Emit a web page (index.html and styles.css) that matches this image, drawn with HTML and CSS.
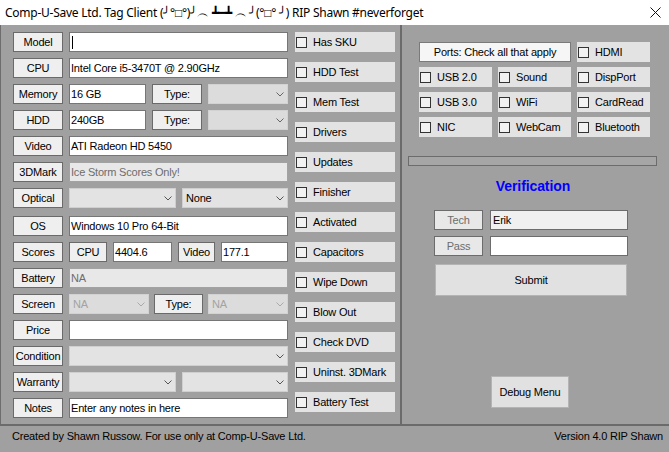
FILE: index.html
```html
<!DOCTYPE html>
<html>
<head>
<meta charset="utf-8">
<link rel="stylesheet" href="styles.css">
</head>
<body>
<div class="win">
  <div class="titlebar">
    <span class="title">Comp-U-Save Ltd. Tag Client (╯°□°)╯︵ ┻━┻ ︵ ╯(°□° ╯) RIP Shawn #neverforget</span>
    <svg class="close" width="11" height="11" viewBox="0 0 11 11"><path d="M0.5 0.5 L10.5 10.5 M10.5 0.5 L0.5 10.5" stroke="#111" stroke-width="1" fill="none"/></svg>
  </div>
  <div class="main">
    <div class="left">
      <div class="form">
        <div class="row"><span class="lbl w50">Model</span><span class="inp w219"><span class="caret"></span></span></div>
        <div class="row"><span class="lbl w50">CPU</span><span class="inp w219">Intel Core i5-3470T @ 2.90GHz</span></div>
        <div class="row"><span class="lbl w50">Memory</span><span class="inp w77">16 GB</span><span class="lbl w50">Type:</span><span class="sel dis w80"><span class="sv"></span><svg class="chev" width="8" height="5" viewBox="0 0 8 5"><path d="M0.5 0.5 L4 4 L7.5 0.5" stroke="#666" fill="none"/></svg></span></div>
        <div class="row"><span class="lbl w50">HDD</span><span class="inp w77">240GB</span><span class="lbl w50">Type:</span><span class="sel dis w80"><span class="sv"></span><svg class="chev" width="8" height="5" viewBox="0 0 8 5"><path d="M0.5 0.5 L4 4 L7.5 0.5" stroke="#666" fill="none"/></svg></span></div>
        <div class="row"><span class="lbl w50">Video</span><span class="inp w219">ATI Radeon HD 5450</span></div>
        <div class="row"><span class="lbl w50">3DMark</span><span class="inp ro w219">Ice Storm Scores Only!</span></div>
        <div class="row"><span class="lbl w50">Optical</span><span class="sel w107"><span class="sv"></span><svg class="chev" width="8" height="5" viewBox="0 0 8 5"><path d="M0.5 0.5 L4 4 L7.5 0.5" stroke="#555" fill="none"/></svg></span><span class="sel w106"><span class="sv">None</span><svg class="chev" width="8" height="5" viewBox="0 0 8 5"><path d="M0.5 0.5 L4 4 L7.5 0.5" stroke="#555" fill="none"/></svg></span></div>
        <div class="row os"><span class="lbl w50">OS</span><span class="inp w219">Windows 10 Pro 64-Bit</span></div>
        <div class="row"><span class="lbl w50">Scores</span><span class="lbl w38">CPU</span><span class="inp w59">4404.6</span><span class="lbl w37">Video</span><span class="inp w67">177.1</span></div>
        <div class="row"><span class="lbl w50">Battery</span><span class="inp ro w219">NA</span></div>
        <div class="row tight"><span class="lbl w50">Screen</span><span class="sel dis w80"><span class="sv">NA</span><svg class="chev" width="8" height="5" viewBox="0 0 8 5"><path d="M0.5 0.5 L4 4 L7.5 0.5" stroke="#aaa" fill="none"/></svg></span><span class="lbl w49">Type:</span><span class="sel dis w80"><span class="sv">NA</span><svg class="chev" width="8" height="5" viewBox="0 0 8 5"><path d="M0.5 0.5 L4 4 L7.5 0.5" stroke="#aaa" fill="none"/></svg></span></div>
        <div class="row"><span class="lbl w50">Price</span><span class="inp w219"></span></div>
        <div class="row"><span class="lbl w50">Condition</span><span class="sel w219"><span class="sv"></span><svg class="chev" width="8" height="5" viewBox="0 0 8 5"><path d="M0.5 0.5 L4 4 L7.5 0.5" stroke="#555" fill="none"/></svg></span></div>
        <div class="row"><span class="lbl w50">Warranty</span><span class="sel w107"><span class="sv"></span><svg class="chev" width="8" height="5" viewBox="0 0 8 5"><path d="M0.5 0.5 L4 4 L7.5 0.5" stroke="#555" fill="none"/></svg></span><span class="sel w106"><span class="sv"></span><svg class="chev" width="8" height="5" viewBox="0 0 8 5"><path d="M0.5 0.5 L4 4 L7.5 0.5" stroke="#555" fill="none"/></svg></span></div>
        <div class="row"><span class="lbl w50">Notes</span><span class="inp w219">Enter any notes in here</span></div>
      </div>
      <div class="checks">
        <div class="chk"><span class="box"></span>Has SKU</div>
        <div class="chk"><span class="box"></span>HDD Test</div>
        <div class="chk"><span class="box"></span>Mem Test</div>
        <div class="chk"><span class="box"></span>Drivers</div>
        <div class="chk"><span class="box"></span>Updates</div>
        <div class="chk"><span class="box"></span>Finisher</div>
        <div class="chk"><span class="box"></span>Activated</div>
        <div class="chk"><span class="box"></span>Capacitors</div>
        <div class="chk"><span class="box"></span>Wipe Down</div>
        <div class="chk"><span class="box"></span>Blow Out</div>
        <div class="chk"><span class="box"></span>Check DVD</div>
        <div class="chk"><span class="box"></span>Uninst. 3DMark</div>
        <div class="chk"><span class="box"></span>Battery Test</div>
      </div>
    </div>
    <div class="right">
      <div class="ports">
        <div class="portsbtn">Ports: Check all that apply</div>
        <div class="chk pc"><span class="box"></span>HDMI</div>
        <div class="chk pc"><span class="box"></span>USB 2.0</div>
        <div class="chk pc"><span class="box"></span>Sound</div>
        <div class="chk pc"><span class="box"></span>DispPort</div>
        <div class="chk pc"><span class="box"></span>USB 3.0</div>
        <div class="chk pc"><span class="box"></span>WiFi</div>
        <div class="chk pc"><span class="box"></span>CardRead</div>
        <div class="chk pc"><span class="box"></span>NIC</div>
        <div class="chk pc"><span class="box"></span>WebCam</div>
        <div class="chk pc"><span class="box"></span>Bluetooth</div>
      </div>
      <div class="progress"></div>
      <div class="vtitle">Verification</div>
      <div class="vrow first"><span class="vlbl">Tech</span><span class="vinp ro">Erik</span></div>
      <div class="vrow"><span class="vlbl">Pass</span><span class="vinp"></span></div>
      <div class="btn submit">Submit</div>
      <div class="btn debug">Debug Menu</div>
    </div>
  </div>
  <div class="status">
    <span>Created by Shawn Russow. For use only at Comp-U-Save Ltd.</span>
    <span>Version 4.0 RIP Shawn</span>
  </div>
</div>
</body>
</html>
```

FILE: styles.css
```css
html, body {
  margin: 0;
  padding: 0;
}
body {
  width: 669px;
  height: 452px;
  overflow: hidden;
  background: #a0a0a0;
  font-family: "Liberation Sans", Arial, sans-serif;
  font-size: 11px;
  letter-spacing: -0.2px;
  color: #000;
}
.win {
  width: 669px;
  height: 452px;
  display: flex;
  flex-direction: column;
  background: #a0a0a0;
}
.titlebar {
  height: 25px;
  flex: none;
  background: #fff;
  display: flex;
  align-items: center;
  justify-content: space-between;
  padding: 0 8px 0 5px;
}
.title {
  font-family: "Noto Sans", "Open Sans", sans-serif;
  font-size: 12px;
  letter-spacing: -0.25px;
  white-space: nowrap;
  color: #000;
}
.close {
  display: block;
}
.main {
  display: flex;
  height: 401px;
  flex: none;
}
.left {
  width: 400px;
  box-sizing: border-box;
  border-left: 1px solid #6d6d6d;
  border-bottom: 2px solid #6b6b6b;
  padding: 7px 0 0 12px;
  display: flex;
}
.form {
  width: 275px;
  display: flex;
  flex-direction: column;
}
.row {
  display: flex;
  height: 20px;
  gap: 6px;
  margin-bottom: 6px;
}
.row.os {
  margin-top: 2px;
}
.row.tight {
  gap: 5px;
}
.row.tight .lbl.w50 {
  margin-right: 1px;
}
.lbl {
  box-sizing: border-box;
  height: 20px;
  border: 1px solid #6a6a6a;
  background: #efefef;
  display: flex;
  align-items: center;
  justify-content: center;
  white-space: nowrap;
  flex: none;
}
.inp {
  box-sizing: border-box;
  height: 20px;
  border: 1px solid #767676;
  background: #fff;
  display: flex;
  align-items: center;
  padding-left: 1px;
  white-space: nowrap;
  overflow: hidden;
  flex: none;
}
.inp.ro {
  background: #e8e8e8;
  border-color: #a2a2a2;
  color: #6d6d6d;
}
.caret {
  width: 1px;
  height: 13px;
  background: #000;
  margin-left: 1px;
}
.sel {
  box-sizing: border-box;
  height: 20px;
  border: 1px solid #cfcfcf;
  background: #e3e3e3;
  display: flex;
  align-items: center;
  justify-content: space-between;
  padding: 0 3px 0 3px;
  flex: none;
}
.sel.dis {
  background: #dcdcdc;
  border-color: #d2d2d2;
  color: #a3a3a3;
}
.sv {
  white-space: nowrap;
}
.chev {
  display: block;
}
.w219 { width: 219px; }
.w107 { width: 107px; }
.w106 { width: 106px; }
.w80 { width: 80px; }
.w77 { width: 77px; }
.w67 { width: 67px; }
.w59 { width: 59px; }
.w50 { width: 50px; }
.w49 { width: 49px; }
.w38 { width: 38px; }
.w37 { width: 37px; }

.checks {
  margin-left: 7px;
  width: 100px;
  display: flex;
  flex-direction: column;
}
.chk {
  height: 20px;
  background: #e3e3e3;
  display: flex;
  align-items: center;
  margin-bottom: 10px;
  white-space: nowrap;
}
.box {
  box-sizing: border-box;
  width: 11px;
  height: 11px;
  border: 1px solid #333;
  background: #f2f2f2;
  margin-left: 1px;
  margin-right: 6px;
  flex: none;
}
.right {
  flex: 1;
  border-left: 2px solid #6b6b6b;
  border-bottom: 2px solid #6b6b6b;
  display: flex;
  flex-direction: column;
  align-items: flex-start;
}
.ports {
  margin: 17px 0 0 17px;
  display: grid;
  grid-template-columns: 73px 73px 73px;
  grid-auto-rows: 20px;
  column-gap: 6px;
  row-gap: 5px;
}
.chk.pc {
  margin-bottom: 0;
}
.portsbtn {
  grid-column: span 2;
  box-sizing: border-box;
  border: 1px solid #7a7a7a;
  background: #f6f6f6;
  display: flex;
  align-items: center;
  justify-content: center;
}
.progress {
  margin: 19px 0 0 6px;
  width: 249px;
  height: 10px;
  box-sizing: border-box;
  border: 1px solid #6c6c6c;
  background: #a6a6a6;
}
.vtitle {
  width: 262px;
  margin-top: 12px;
  text-align: center;
  color: #0000ff;
  font-weight: bold;
  font-size: 14px;
  line-height: 16px;
  letter-spacing: -0.1px;
}
.vrow {
  display: flex;
  gap: 7px;
  margin: 6px 0 0 32px;
  height: 20px;
}
.vrow.first {
  margin-top: 16px;
}
.vlbl {
  box-sizing: border-box;
  width: 49px;
  height: 20px;
  border: 1px solid #6c6c6c;
  background: #e8e8e8;
  color: #6d6d6d;
  display: flex;
  align-items: center;
  justify-content: center;
}
.vinp {
  box-sizing: border-box;
  width: 138px;
  height: 20px;
  border: 1px solid #6c6c6c;
  background: #fff;
  display: flex;
  align-items: center;
  padding-left: 2px;
}
.vinp.ro {
  background: #f0f0f0;
}
.btn {
  box-sizing: border-box;
  height: 32px;
  border: 1px solid #b4b4b4;
  background: #e1e1e1;
  display: flex;
  align-items: center;
  justify-content: center;
}
.submit {
  width: 192px;
  margin: 8px 0 0 33px;
}
.debug {
  width: 78px;
  margin: 80px 0 0 89px;
}
.status {
  height: 24px;
  flex: none;
  border-bottom: 2px solid #1e1e1e;
  display: flex;
  justify-content: space-between;
  align-items: flex-start;
  padding: 4px 6px 0 12px;
  box-sizing: content-box;
  line-height: 13px;
}
```
